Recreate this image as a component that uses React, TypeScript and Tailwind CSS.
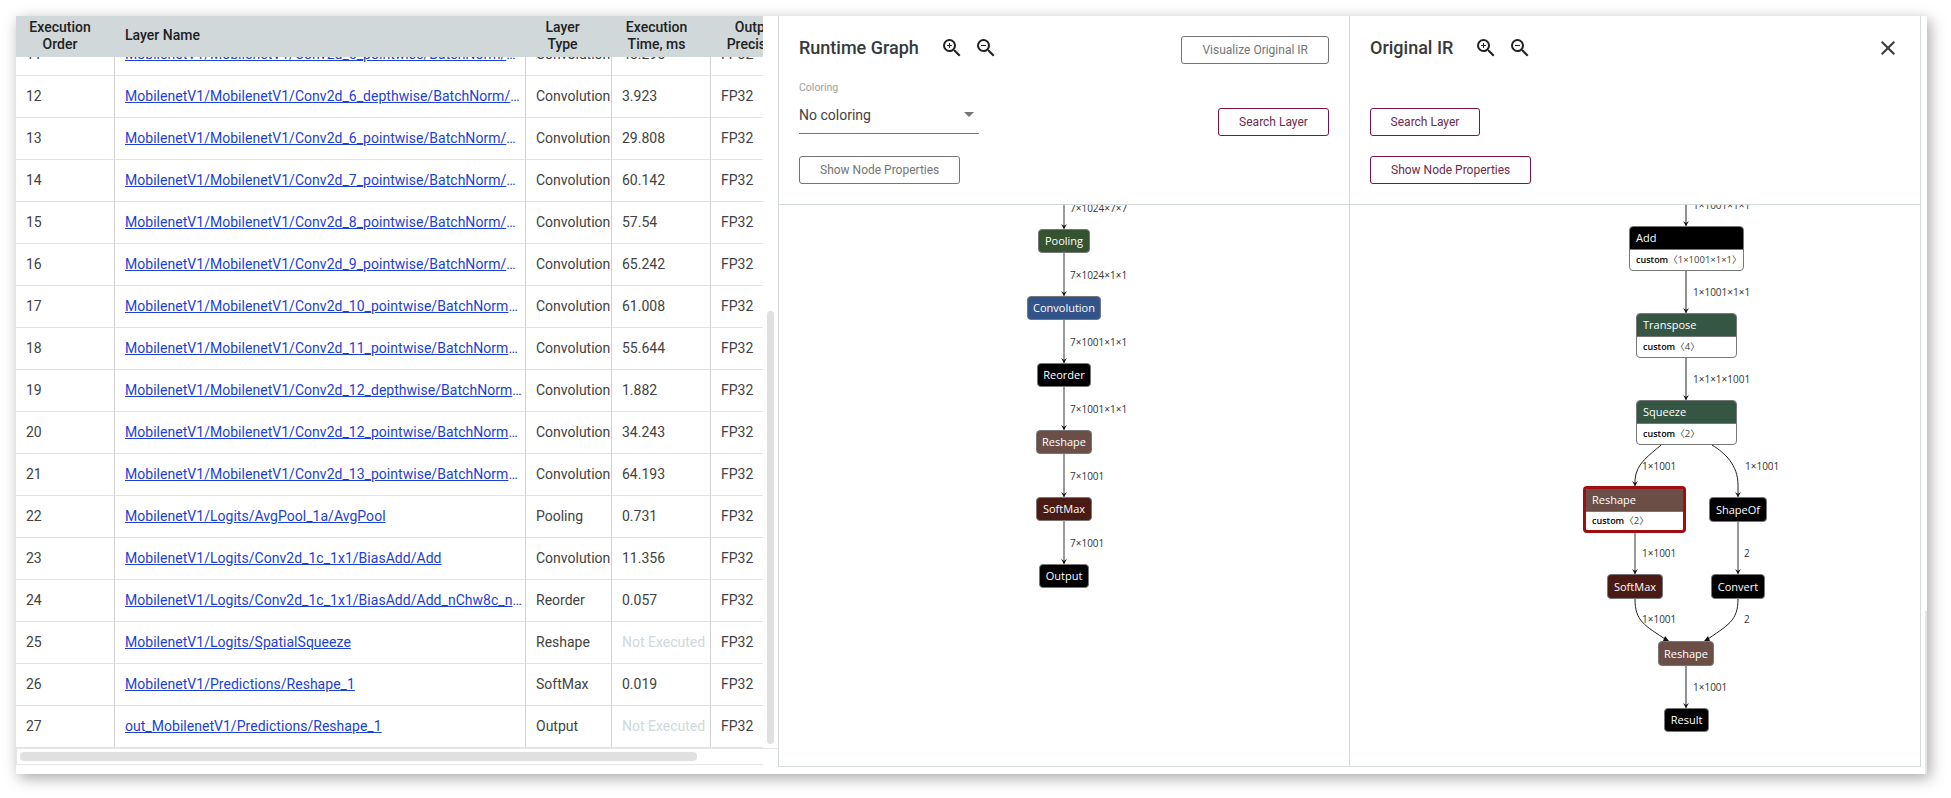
import { MdClose, MdZoomIn, MdZoomOut } from "react-icons/md";

type Row = { id: number; name: string; type: string; time: string };

const rows: Row[] = [
  { id: 11, name: "MobilenetV1/MobilenetV1/Conv2d_5_pointwise/BatchNorm/FusedBatchNorm", type: "Convolution", time: "45.295" },
  { id: 12, name: "MobilenetV1/MobilenetV1/Conv2d_6_depthwise/BatchNorm/FusedBatchNorm", type: "Convolution", time: "3.923" },
  { id: 13, name: "MobilenetV1/MobilenetV1/Conv2d_6_pointwise/BatchNorm/FusedBatchNorm", type: "Convolution", time: "29.808" },
  { id: 14, name: "MobilenetV1/MobilenetV1/Conv2d_7_pointwise/BatchNorm/FusedBatchNorm", type: "Convolution", time: "60.142" },
  { id: 15, name: "MobilenetV1/MobilenetV1/Conv2d_8_pointwise/BatchNorm/FusedBatchNorm", type: "Convolution", time: "57.54" },
  { id: 16, name: "MobilenetV1/MobilenetV1/Conv2d_9_pointwise/BatchNorm/FusedBatchNorm", type: "Convolution", time: "65.242" },
  { id: 17, name: "MobilenetV1/MobilenetV1/Conv2d_10_pointwise/BatchNorm/FusedBatchNorm", type: "Convolution", time: "61.008" },
  { id: 18, name: "MobilenetV1/MobilenetV1/Conv2d_11_pointwise/BatchNorm/FusedBatchNorm", type: "Convolution", time: "55.644" },
  { id: 19, name: "MobilenetV1/MobilenetV1/Conv2d_12_depthwise/BatchNorm/FusedBatchNorm", type: "Convolution", time: "1.882" },
  { id: 20, name: "MobilenetV1/MobilenetV1/Conv2d_12_pointwise/BatchNorm/FusedBatchNorm", type: "Convolution", time: "34.243" },
  { id: 21, name: "MobilenetV1/MobilenetV1/Conv2d_13_pointwise/BatchNorm/FusedBatchNorm", type: "Convolution", time: "64.193" },
  { id: 22, name: "MobilenetV1/Logits/AvgPool_1a/AvgPool", type: "Pooling", time: "0.731" },
  { id: 23, name: "MobilenetV1/Logits/Conv2d_1c_1x1/BiasAdd/Add", type: "Convolution", time: "11.356" },
  { id: 24, name: "MobilenetV1/Logits/Conv2d_1c_1x1/BiasAdd/Add_nChw8c_nhwc_reorder", type: "Reorder", time: "0.057" },
  { id: 25, name: "MobilenetV1/Logits/SpatialSqueeze", type: "Reshape", time: "Not Executed" },
  { id: 26, name: "MobilenetV1/Predictions/Reshape_1", type: "SoftMax", time: "0.019" },
  { id: 27, name: "out_MobilenetV1/Predictions/Reshape_1", type: "Output", time: "Not Executed" },
];

function Arrow({ x, y }: { x: number; y: number }) {
  return <path d={`M${x - 3} ${y - 5} L${x} ${y} L${x + 3} ${y - 5} L${x} ${y - 3} Z`} fill="#111" />;
}

function TableRow({ row }: { row: Row }) {
  return (
    <div className="flex h-[42px] w-[795px] shrink-0 border-b border-[#e2e2e2] pb-[2px] text-sm text-[#424242]">
      <div className="flex w-[98px] shrink-0 items-center pl-[10px]">{row.id}</div>
      <div className="mb-[-2px] w-px shrink-0 bg-[#d2d2d2]" />
      <div className="flex w-[410px] shrink-0 items-center pl-[10px]">
        <a href="#" className="block w-[398px] truncate tracking-[0.03px] text-[#1c3fd4] underline">
          {row.name}
        </a>
      </div>
      <div className="mb-[-2px] w-px shrink-0 bg-[#d2d2d2]" />
      <div className="flex w-[85px] shrink-0 items-center pl-[10px]">{row.type}</div>
      <div className="mb-[-2px] w-px shrink-0 bg-[#d2d2d2]" />
      <div className={`flex w-[98px] shrink-0 items-center pl-[10px] ${row.time === "Not Executed" ? "text-[#cfd8dc]" : ""}`}>
        {row.time}
      </div>
      <div className="mb-[-2px] w-px shrink-0 bg-[#d2d2d2]" />
      <div className="flex flex-1 items-center pl-[10px]">FP32</div>
    </div>
  );
}

function Layers() {
  return (
    <div className="flex h-[748px] w-[762px] shrink-0 flex-col">
      <div className="flex h-[732px] w-[762px]">
        <div className="flex w-[747px] shrink-0 flex-col overflow-hidden">
          <div className="flex h-[41px] w-[795px] shrink-0 items-center bg-[#d0d8da] pb-[2px] text-center text-sm leading-[17px] font-medium text-[#212121]">
            <div className="w-[99px] shrink-0 pr-[11px]">Execution<br />Order</div>
            <div className="w-[411px] shrink-0 pl-[10px] text-left">Layer Name</div>
            <div className="w-[86px] shrink-0 pr-[13px]">Layer<br />Type</div>
            <div className="w-[99px] shrink-0 pr-[10px]">Execution<br />Time, ms</div>
            <div className="flex-1 pr-[10px]">Output<br />Precision</div>
          </div>
          <div className="flex h-[691px] flex-col overflow-hidden">
            <div className="mt-[-23px] flex flex-col">
              {rows.map((r) => (
                <TableRow key={r.id} row={r} />
              ))}
            </div>
          </div>
        </div>
        <div className="w-[15px] shrink-0 pt-[295px] pl-1">
          <div className="h-[433px] w-[7px] rounded-full bg-[#e0e0e0]" />
        </div>
      </div>
      <div className="border-t border-[#e6e6e6]">
        <div className="h-[16px] w-[747px] border-b border-l border-[#e6e6e6] pt-[3px] pl-[3px]">
          <div className="h-[9px] w-[677px] rounded bg-[#e0e0e0]" />
        </div>
      </div>
    </div>
  );
}

function ZoomIcons() {
  return (
    <div className="ml-[21px] flex gap-[10px] text-[#212121]">
      <MdZoomIn size={24} />
      <MdZoomOut size={24} />
    </div>
  );
}

function Button({ label, active, className }: { label: string; active?: boolean; className?: string }) {
  return (
    <button
      className={`${
        active
          ? "h-7 rounded-[3px] border border-[#7b1348] text-xs text-[#6d2a4c]"
          : "h-7 rounded-[3px] border border-[#757575] text-xs text-[#757575]"
      } ${className ?? "px-5"}`}
    >
      {label}
    </button>
  );
}

function Node({ label, className }: { label: string; className: string }) {
  return (
    <div className={`absolute flex items-center justify-center rounded-[4px] border border-[#777] pt-px text-[11px] text-white ${className}`}>
      {label}
    </div>
  );
}

function CustomNode({ label, shape, className, head }: { label: string; shape: string; className: string; head: string }) {
  return (
    <div className={`absolute flex flex-col overflow-hidden rounded-[4px] bg-white ${className}`}>
      <div className={`flex h-[23px] shrink-0 items-center border-b border-[#777] pt-px pl-[6px] text-[11px] text-white ${head}`}>{label}</div>
      <div className="flex flex-1 items-center pl-[6px] whitespace-nowrap text-[#444]">
        <span className="text-[9px] font-semibold text-black">custom</span>
        <span className="font-['Open_Sans','Noto_Sans_CJK_SC',sans-serif] text-[9.5px]">〈{shape}〉</span>
      </div>
    </div>
  );
}

function EdgeLabel({ label, className }: { label: string; className: string }) {
  return <span className={`absolute text-[10px] leading-[14px] whitespace-nowrap text-[#333] ${className}`}>{label}</span>;
}

function RuntimeGraph() {
  const nodeYs = [24, 91, 158, 225, 292, 359];
  return (
    <div className="relative flex-1 overflow-hidden font-['Open_Sans',sans-serif]">
      <svg className="absolute inset-0 h-full w-full">
        <line x1="285" y1="-5" x2="285" y2="359" stroke="#7a7a7a" strokeWidth="1.5" />
        {nodeYs.map((y) => (
          <Arrow key={y} x={285} y={y} />
        ))}
      </svg>
      <EdgeLabel label="7×1024×7×7" className="left-[291px] top-[-4px]" />
      <EdgeLabel label="7×1024×1×1" className="left-[291px] top-[63px]" />
      <EdgeLabel label="7×1001×1×1" className="left-[291px] top-[130px]" />
      <EdgeLabel label="7×1001×1×1" className="left-[291px] top-[197px]" />
      <EdgeLabel label="7×1001" className="left-[291px] top-[264px]" />
      <EdgeLabel label="7×1001" className="left-[291px] top-[331px]" />
      <Node label="Pooling" className="left-[259px] top-[24px] h-[24px] w-[52px] bg-[#355231]" />
      <Node label="Convolution" className="left-[248px] top-[91px] h-[24px] w-[74px] bg-[#33548a]" />
      <Node label="Reorder" className="left-[258px] top-[158px] h-[24px] w-[54px] bg-black" />
      <Node label="Reshape" className="left-[257px] top-[225px] h-[24px] w-[56px] bg-[#6b4f47]" />
      <Node label="SoftMax" className="left-[257px] top-[292px] h-[24px] w-[56px] bg-[#4a1a14]" />
      <Node label="Output" className="left-[260px] top-[359px] h-[24px] w-[50px] bg-black" />
    </div>
  );
}

function OriginalGraph() {
  return (
    <div className="relative flex-1 overflow-hidden font-['Open_Sans',sans-serif]">
      <svg className="absolute inset-0 h-full w-full" fill="none">
        <g stroke="#222" strokeWidth="1">
          <path d="M336 -5 V21" />
          <path d="M336 66 V108" />
          <path d="M336 153 V195" />
          <path d="M311 240 C300 250 286 258 285 275 V281" />
          <path d="M362 240 C375 248 388 260 388 280 V292" />
          <path d="M285 394 C285 416 294 420 318 436" />
          <path d="M388 394 C388 416 378 420 355 436" />
          <path d="M336 461 V503" />
        </g>
        <path d="M285 328 V369" stroke="#777" strokeWidth="1.5" />
        <path d="M388 317 V369" stroke="#777" strokeWidth="1.5" />
        <Arrow x={336} y={21} />
        <Arrow x={336} y={108} />
        <Arrow x={336} y={195} />
        <Arrow x={285} y={281} />
        <Arrow x={388} y={292} />
        <Arrow x={285} y={369} />
        <Arrow x={388} y={369} />
        <Arrow x={336} y={503} />
        <path d="M313 436 L319 436 L315 431 Z" fill="#111" />
        <path d="M354 436 L360 436 L358 431 Z" fill="#111" />
      </svg>
      <EdgeLabel label="1×1001×1×1" className="left-[343px] top-[-7px]" />
      <EdgeLabel label="1×1001×1×1" className="left-[343px] top-[80px]" />
      <EdgeLabel label="1×1×1×1001" className="left-[343px] top-[167px]" />
      <EdgeLabel label="1×1001" className="left-[292px] top-[254px]" />
      <EdgeLabel label="1×1001" className="left-[395px] top-[254px]" />
      <EdgeLabel label="1×1001" className="left-[292px] top-[341px]" />
      <EdgeLabel label="2" className="left-[394px] top-[341px]" />
      <EdgeLabel label="1×1001" className="left-[292px] top-[407px]" />
      <EdgeLabel label="2" className="left-[394px] top-[407px]" />
      <EdgeLabel label="1×1001" className="left-[343px] top-[475px]" />
      <CustomNode label="Add" shape="1×1001×1×1" head="bg-black" className="left-[279px] top-[21px] h-[45px] w-[115px] border border-[#777]" />
      <CustomNode label="Transpose" shape="4" head="bg-[#345643]" className="left-[286px] top-[108px] h-[45px] w-[101px] border border-[#777]" />
      <CustomNode label="Squeeze" shape="2" head="bg-[#345643]" className="left-[286px] top-[195px] h-[45px] w-[101px] border border-[#777]" />
      <CustomNode label="Reshape" shape="2" head="bg-[#6b4f47]" className="left-[233px] top-[281px] h-[47px] w-[103px] border-[3px] border-[#a20d12]" />
      <Node label="ShapeOf" className="left-[359px] top-[292px] h-[25px] w-[58px] bg-black" />
      <Node label="SoftMax" className="left-[257px] top-[369px] h-[25px] w-[56px] bg-[#4a1a14]" />
      <Node label="Convert" className="left-[361px] top-[369px] h-[25px] w-[54px] bg-black" />
      <Node label="Reshape" className="left-[308px] top-[436px] h-[25px] w-[56px] bg-[#6b4f47]" />
      <Node label="Result" className="left-[314px] top-[503px] h-[24px] w-[45px] bg-black" />
    </div>
  );
}

export default function App() {
  return (
    <div className="relative h-[798px] w-[1951px] overflow-hidden bg-white p-4 font-['Roboto',sans-serif]">
      <div className="flex h-[758px] w-[1911px] bg-white shadow-[3px_4px_14px_rgba(0,0,0,0.35)]">
        <Layers />
        <div className="flex h-[751px] w-[1143px] shrink-0 border border-t-0 border-[#d5dbdc]">
          <section className="flex w-[571px] shrink-0 flex-col border-r border-[#d5dbdc]">
            <div className="h-[189px] shrink-0 border-b border-[#d5dbdc] px-5 pt-5">
              <div className="flex h-7 items-start justify-between">
                <div className="flex h-6 items-center">
                  <h2 className="text-lg font-medium text-[#37393b]">Runtime Graph</h2>
                  <ZoomIcons />
                </div>
                <Button label="Visualize Original IR" />
              </div>
              <div className="flex h-[72px] items-end justify-between">
                <div className="mb-[2px] w-[180px]">
                  <div className="mb-[2px] text-[10.5px] leading-[12px] text-[#9e9e9e]">Coloring</div>
                  <div className="flex h-[38px] items-center justify-between border-b border-[#757575] pr-[5px] text-sm text-[#424242]">
                    No coloring
                    <svg width="10" height="5" viewBox="0 0 10 5">
                      <path d="M0 0 H10 L5 5 Z" fill="#757575" />
                    </svg>
                  </div>
                </div>
                <Button label="Search Layer" active className="w-[111px]" />
              </div>
              <div className="mt-5">
                <Button label="Show Node Properties" />
              </div>
            </div>
            <RuntimeGraph />
          </section>
          <section className="flex flex-1 flex-col">
            <div className="h-[189px] shrink-0 border-b border-[#d5dbdc] px-5 pt-5">
              <div className="flex h-7 items-start justify-between">
                <div className="flex h-6 items-center">
                  <h2 className="text-lg font-medium text-[#37393b]">Original IR</h2>
                  <ZoomIcons />
                </div>
                <MdClose size={24} className="text-[#37393b]" />
              </div>
              <div className="flex h-[72px] items-end">
                <Button label="Search Layer" active className="w-[110px]" />
              </div>
              <div className="mt-5">
                <Button label="Show Node Properties" active />
              </div>
            </div>
            <OriginalGraph />
          </section>
        </div>
      </div>
      <div className="absolute top-[611px] left-[1925px] h-[163px] w-[2px] bg-[#e6e6e6]" />
    </div>
  );
}
